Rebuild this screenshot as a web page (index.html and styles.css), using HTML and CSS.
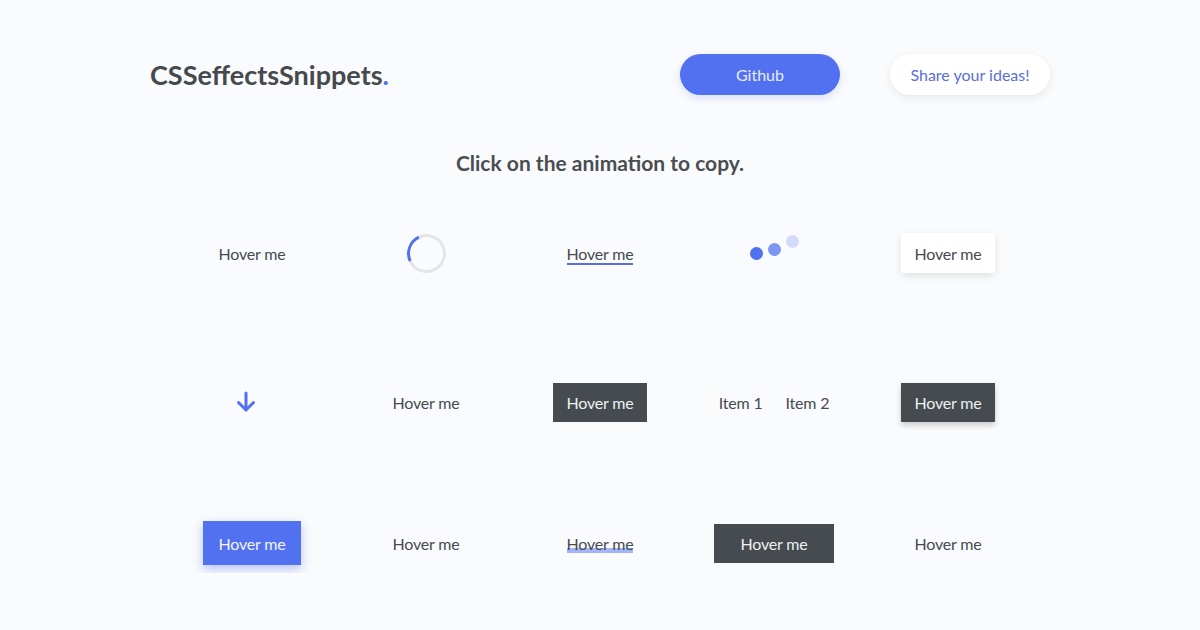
FILE: index.html
```html
<!DOCTYPE html>
<html lang="en">
<head>
  <meta charset="UTF-8">
  <title>CSSeffectsSnippets</title>
  <link rel="stylesheet" href="styles.css">
</head>
<body>

  <!-- Header -->
  <div class="header">
    <div class="logo">CSSeffectsSnippets<span class="dot">.</span></div>
    <div class="nav">
      <a class="btn btn-github" href="#">Github</a>
      <a class="btn btn-share" href="#">Share your ideas!</a>
    </div>
  </div>

  <h2 class="title">Click on the animation to copy.</h2>

  <!-- Effects -->
  <div class="row row-1">
    <div class="cell"><span class="plain">Hover me</span></div>
    <div class="cell"><div class="spinner"></div></div>
    <div class="cell"><span class="underline">Hover me</span></div>
    <div class="cell">
      <div class="dots">
        <span class="d d1"></span>
        <span class="d d2"></span>
        <span class="d d3"></span>
      </div>
    </div>
    <div class="cell"><span class="card">Hover me</span></div>
  </div>

  <div class="row row-2">
    <div class="cell">
      <svg class="arrow" width="22" height="22" viewBox="0 0 22 22">
        <path d="M11 2 V19 M3.5 11.5 L11 19 L18.5 11.5" fill="none" stroke="#5271f0" stroke-width="3" stroke-linecap="round" stroke-linejoin="round"/>
      </svg>
    </div>
    <div class="cell"><span class="plain">Hover me</span></div>
    <div class="cell"><span class="dark">Hover me</span></div>
    <div class="cell items"><span>Item 1</span><span>Item 2</span></div>
    <div class="cell"><span class="dark dark-shadow">Hover me</span></div>
  </div>

  <div class="row row-3">
    <div class="cell"><span class="blue">Hover me</span></div>
    <div class="cell"><span class="plain">Hover me</span></div>
    <div class="cell"><span class="highlight">Hover me</span></div>
    <div class="cell"><span class="dark dark-wide">Hover me</span></div>
    <div class="cell"><span class="plain">Hover me</span></div>
  </div>

</body>
</html>
```
FILE: styles.css
```css
body {
  font-family: Lato, "Noto Sans", sans-serif;
  margin: 0;
  background-color: #fafbfd;
  color: #474a4f;
}
/* Header */
.header {
  width: 900px;
  margin: 0 auto;
  padding-top: 54px;
  display: flex;
  align-items: center;
  justify-content: space-between;
}
.logo {
  font-size: 27px;
  font-weight: bold;
  color: #46494e;
}
.logo .dot {
  color: #5271f0;
}
.nav {
  display: flex;
  gap: 50px;
}
.btn {
  display: flex;
  align-items: center;
  justify-content: center;
  width: 160px;
  height: 41px;
  border-radius: 21px;
  font-size: 16px;
  text-decoration: none;
}
.btn-github {
  background-color: #5271f0;
  color: #e8ecfd;
  box-shadow: 0 3px 8px rgba(82, 113, 240, 0.2);
}
.btn-share {
  background-color: #fff;
  color: #5a6fd8;
  box-shadow: 0 3px 10px rgba(0, 0, 0, 0.08);
}
.title {
  text-align: center;
  font-size: 21px;
  font-weight: bold;
  color: #4a4d52;
  margin: 55px 0 0;
}
/* Effect rows */
.row {
  display: flex;
  justify-content: center;
  height: 60px;
}
.row-1 { margin-top: 48px; }
.row-2 { margin-top: 89px; }
.row-3 { margin-top: 81px; }
.cell {
  width: 174px;
  display: flex;
  align-items: center;
  justify-content: center;
  font-size: 16px;
  letter-spacing: -0.2px;
  color: #474a4f;
}
.spinner {
  width: 33px;
  height: 33px;
  border-radius: 50%;
  border: 3px solid #e4e5e8;
  border-left-color: #5271f0;
  transform: rotate(20deg);
}
.underline {
  border-bottom: 2px solid #5a6fd8;
  margin-top: 2px;
}
.dots {
  display: flex;
  align-items: flex-end;
  gap: 5px;
  height: 26px;
  margin-top: -12px;
}
.d {
  width: 13px;
  height: 13px;
  border-radius: 50%;
}
.d1 { background-color: #5271f0; }
.d2 { background-color: #7e96f3; margin-bottom: 4px; }
.d3 { background-color: #d2dbfb; margin-bottom: 12px; }
.card {
  background-color: #fff;
  padding: 11px 14px 10px;
  box-shadow: 0 3px 8px rgba(0, 0, 0, 0.1);
  border-radius: 2px;
}
.arrow {
  margin-left: -12px;
}
.dark {
  background-color: #464b4f;
  color: #eef0f2;
  padding: 10px 14px;
}
.dark-shadow {
  box-shadow: 0 3px 6px rgba(0, 0, 0, 0.2);
}
.dark-wide {
  padding: 10px 27px;
}
.items {
  gap: 23px;
}
.blue {
  background-color: #5271f0;
  color: #f1f4fe;
  padding: 13px 16px 12px;
  box-shadow: 0 4px 10px rgba(82, 113, 240, 0.4);
}
.highlight {
  background-image: linear-gradient(#a4b5f7, #a4b5f7);
  background-repeat: no-repeat;
  background-size: 100% 5px;
  background-position: 0 100%;
}
```
